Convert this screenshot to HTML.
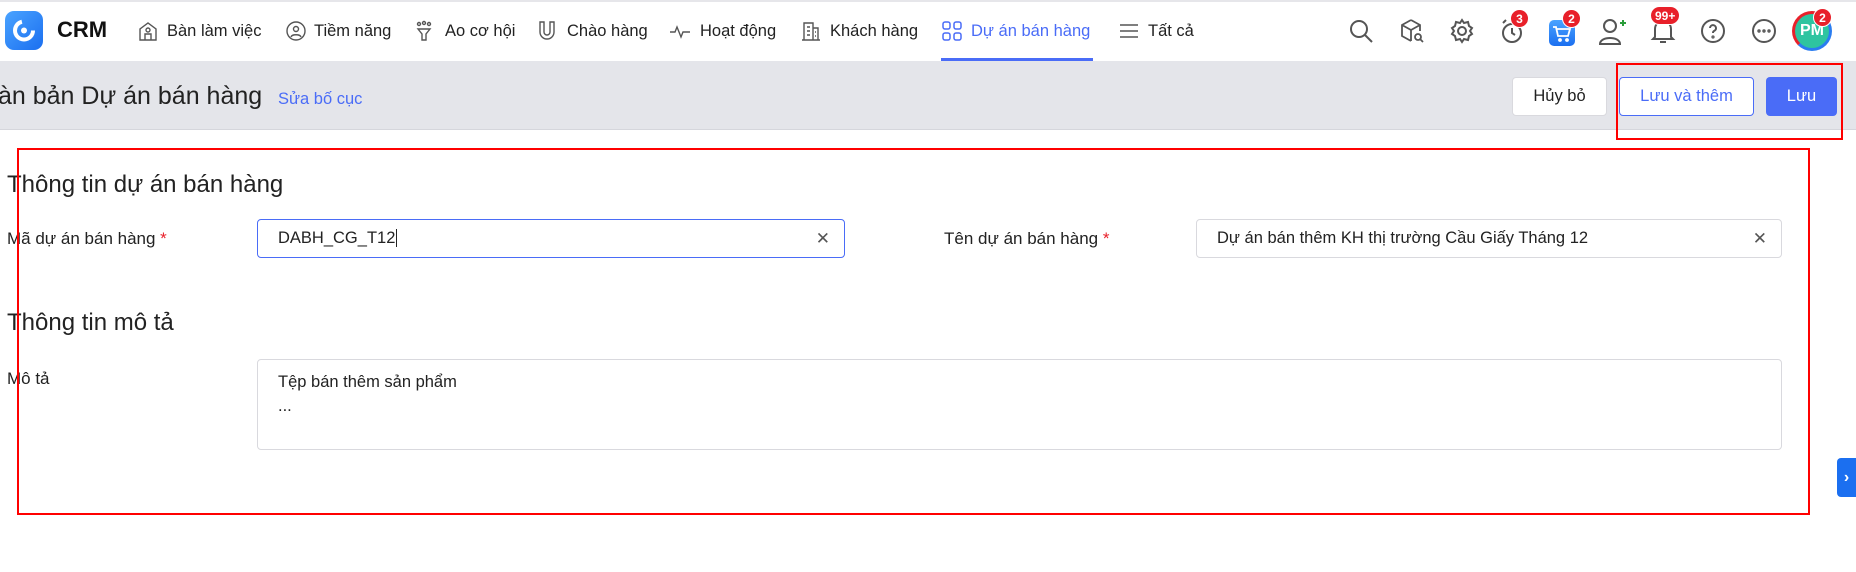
<!DOCTYPE html>
<html><head><meta charset="utf-8"><style>
*{box-sizing:border-box;margin:0;padding:0}
body{width:1856px;height:572px;background:#fff;font-family:"Liberation Sans",Arial,sans-serif;color:#1f1f1f;position:relative;overflow:hidden}
.a{position:absolute;white-space:nowrap}
.nav{font-size:16.5px;color:#222;top:22px}
.ic{position:absolute;top:20px}
.badge{position:absolute;background:#e8202a;color:#fff;font-weight:bold;font-size:12px;height:19px;min-width:19px;border-radius:10px;text-align:center;line-height:19px;padding:0 4px;border:1px solid #fff}
.lbl{font-size:17px;color:#222}
.req{color:#e8202a}
.inp{position:absolute;height:39px;border:1px solid #d9d9de;border-radius:4px;font-size:16.5px;padding:0 20px;line-height:37px;color:#222}
.x{position:absolute;right:14px;top:0;color:#555;font-size:17px}
</style></head><body>
<div class="a" style="left:0;top:0;width:1856px;height:2px;background:#e6e6ea"></div>
<div class="a" style="left:5px;top:11px;width:38px;height:39px;border-radius:9px;background:linear-gradient(135deg,#4aa3ff,#1b6ff0)">
<svg width="38" height="39" viewBox="0 0 38 39"><circle cx="19" cy="19.5" r="9" fill="none" stroke="#fff" stroke-width="4" stroke-dasharray="40 17"/><circle cx="19" cy="19.5" r="3" fill="#fff"/></svg></div>
<div class="a" style="left:57px;top:17px;font-size:22px;font-weight:bold;color:#111">CRM</div>

<svg class="ic" style="left:137px" width="22" height="22" viewBox="0 0 22 22" fill="none" stroke="#555" stroke-width="1.4"><path d="M3 20V9l8-6 8 6v11z"/><path d="M8 20v-6h6v6"/><circle cx="11" cy="10" r="2"/></svg>
<div class="a nav" style="left:167px">Bàn làm việc</div>
<svg class="ic" style="left:285px" width="22" height="22" viewBox="0 0 22 22" fill="none" stroke="#555" stroke-width="1.4"><circle cx="11" cy="11" r="9"/><circle cx="11" cy="9" r="2.5"/><path d="M6 17c1-3 9-3 10 0"/></svg>
<div class="a nav" style="left:314px">Tiềm năng</div>
<svg class="ic" style="left:414px" width="20" height="22" viewBox="0 0 20 22" fill="none" stroke="#555" stroke-width="1.4"><circle cx="5" cy="4" r="1.5"/><circle cx="10" cy="3" r="1.5"/><circle cx="15" cy="4" r="1.5"/><path d="M4 9h12l-4 5v6h-4v-6z"/></svg>
<div class="a nav" style="left:445px">Ao cơ hội</div>
<svg class="ic" style="left:537px" width="20" height="22" viewBox="0 0 20 22" fill="none" stroke="#555" stroke-width="1.4"><path d="M3 2v10a7 7 0 0 0 14 0V2h-4v10a3 3 0 0 1-6 0V2z"/></svg>
<div class="a nav" style="left:567px">Chào hàng</div>
<svg class="ic" style="left:669px" width="22" height="22" viewBox="0 0 22 22" fill="none" stroke="#555" stroke-width="1.4"><path d="M1 12h5l2-5 4 10 2-5h7"/></svg>
<div class="a nav" style="left:700px">Hoạt động</div>
<svg class="ic" style="left:800px" width="22" height="22" viewBox="0 0 22 22" fill="none" stroke="#555" stroke-width="1.4"><path d="M2 20h18M4 20V3h9v17M13 8h5v12"/><path d="M7 7h3M7 11h3M7 15h3M15 12h1M15 16h1"/></svg>
<div class="a nav" style="left:830px">Khách hàng</div>
<svg class="ic" style="left:942px" width="20" height="22" viewBox="0 0 20 22" fill="none" stroke="#4a6cf7" stroke-width="1.5"><rect x="1" y="2" width="7" height="7" rx="2"/><rect x="12" y="2" width="7" height="7" rx="2"/><rect x="1" y="13" width="7" height="7" rx="2"/><rect x="12" y="13" width="7" height="7" rx="2"/></svg>
<div class="a nav" style="left:971px;color:#4a6cf7">Dự án bán hàng</div>
<div class="a" style="left:941px;top:58px;width:152px;height:3px;background:#4a6cf7"></div>
<svg class="ic" style="left:1119px" width="20" height="22" viewBox="0 0 20 22" fill="none" stroke="#555" stroke-width="1.5"><path d="M1 5h18M1 11h18M1 17h18"/></svg>
<div class="a nav" style="left:1148px">Tất cả</div>

<svg class="ic" style="left:1348px;top:18px" width="26" height="26" viewBox="0 0 26 26" fill="none" stroke="#555" stroke-width="2"><circle cx="11" cy="11" r="8"/><path d="M17 17l7 7"/></svg>
<svg class="ic" style="left:1399px;top:18px" width="26" height="26" viewBox="0 0 26 26" fill="none" stroke="#555" stroke-width="1.8"><path d="M12 2l9 5v6M12 2L3 7v11l9 5M3 7l9 5 9-5M12 12v11"/><circle cx="19" cy="19" r="3"/><path d="M21 21l3 3"/></svg>
<svg class="ic" style="left:1449px;top:18px" width="26" height="26" viewBox="0 0 26 26" fill="none" stroke="#555" stroke-width="2"><circle cx="13" cy="13" r="4"/><path d="M13 2l2 3 4-1 1 4 3 2-2 3 2 3-3 2-1 4-4-1-2 3-2-3-4 1-1-4-3-2 2-3-2-3 3-2 1-4 4 1z"/></svg>
<svg class="ic" style="left:1499px;top:18px" width="26" height="26" viewBox="0 0 26 26" fill="none" stroke="#555" stroke-width="2"><circle cx="13" cy="15" r="9"/><path d="M13 10v5l3 2M4 5l3-3"/></svg>
<div class="badge" style="left:1510px;top:9px">3</div>
<div class="a" style="left:1549px;top:20px;width:26px;height:26px;border-radius:5px;background:linear-gradient(#4aa3ff,#1b6ff0)"><svg width="26" height="26" viewBox="0 0 26 26" fill="none" stroke="#fff" stroke-width="1.8"><path d="M4 7h3l2 9h10l2-7H8"/><circle cx="11" cy="20" r="1"/><circle cx="18" cy="20" r="1"/></svg></div>
<div class="badge" style="left:1562px;top:9px">2</div>
<svg class="ic" style="left:1598px;top:17px" width="30" height="28" viewBox="0 0 30 28" fill="none" stroke="#555" stroke-width="2"><circle cx="12" cy="9" r="6"/><path d="M2 27c0-8 20-8 20 0z"/><path d="M25 3v6M22 6h6" stroke="#2a9d3a"/></svg>
<svg class="ic" style="left:1650px;top:17px" width="26" height="28" viewBox="0 0 26 28" fill="none" stroke="#555" stroke-width="2"><path d="M5 20V12a8 8 0 0 1 16 0v8l2 2H3z"/><path d="M10 25h6"/></svg>
<div class="badge" style="left:1650px;top:6px">99+</div>
<svg class="ic" style="left:1700px;top:18px" width="26" height="26" viewBox="0 0 26 26" fill="none" stroke="#555" stroke-width="2"><circle cx="13" cy="13" r="11"/><path d="M10 10a3 3 0 1 1 4 3c-1 .5-1 1-1 2"/><circle cx="13" cy="19" r=".6"/></svg>
<svg class="ic" style="left:1751px;top:18px" width="26" height="26" viewBox="0 0 26 26" fill="none" stroke="#555" stroke-width="2"><circle cx="13" cy="13" r="11"/><circle cx="8" cy="13" r=".7"/><circle cx="13" cy="13" r=".7"/><circle cx="18" cy="13" r=".7"/></svg>
<div class="a" style="left:1792px;top:11px;width:40px;height:40px;border-radius:50%;border:3px solid #2a7cf0;border-left-color:#e8202a;border-top-color:#e8202a;background:#2ec4a0;color:#fff;font-weight:bold;font-size:16px;text-align:center;line-height:34px">PM</div>
<div class="badge" style="left:1813px;top:8px">2</div>

<div class="a" style="left:0;top:61px;width:1856px;height:69px;background:#e4e5ea;border-bottom:1px solid #d5d6dc"></div>
<div class="a" style="left:-2px;top:82px;font-size:25px;color:#222">àn bản Dự án bán hàng</div>
<div class="a" style="left:278px;top:90px;font-size:16.5px;color:#4a6cf7">Sửa bố cục</div>
<div class="a" style="left:1512px;top:77px;width:95px;height:39px;background:#fff;border:1px solid #d9d9de;border-radius:4px;font-size:16.5px;text-align:center;line-height:37px;color:#222">Hủy bỏ</div>
<div class="a" style="left:1619px;top:77px;width:135px;height:39px;background:#fff;border:1px solid #4a6cf7;border-radius:4px;font-size:16.5px;text-align:center;line-height:37px;color:#4a6cf7">Lưu và thêm</div>
<div class="a" style="left:1766px;top:77px;width:71px;height:39px;background:#4a6cf7;border-radius:4px;font-size:16.5px;text-align:center;line-height:39px;color:#fff">Lưu</div>
<div class="a" style="left:1616px;top:63px;width:227px;height:77px;border:2px solid #f00"></div>

<div class="a" style="left:7px;top:171px;font-size:24px;color:#222">Thông tin dự án bán hàng</div>
<div class="a lbl" style="left:7px;top:229px">Mã dự án bán hàng <span class="req">*</span></div>
<div class="inp" style="left:257px;top:219px;width:588px;border-color:#4a6cf7">DABH_CG_T12<span style="border-left:1px solid #222;margin-left:1px"></span><span class="x">✕</span></div>
<div class="a lbl" style="left:944px;top:229px">Tên dự án bán hàng <span class="req">*</span></div>
<div class="inp" style="left:1196px;top:219px;width:586px">Dự án bán thêm KH thị trường Cầu Giấy Tháng 12<span class="x">✕</span></div>
<div class="a" style="left:7px;top:309px;font-size:24px;color:#222">Thông tin mô tả</div>
<div class="a lbl" style="left:7px;top:369px">Mô tả</div>
<div class="inp" style="left:257px;top:359px;width:1525px;height:91px;line-height:24px;padding-top:10px">Tệp bán thêm sản phẩm<br>...</div>
<div class="a" style="left:17px;top:148px;width:1793px;height:367px;border:2px solid #f00"></div>
<div class="a" style="left:1837px;top:458px;width:19px;height:39px;background:#1b6ff0;border-radius:4px 0 0 4px;color:#fff;font-weight:bold;font-size:16px;line-height:39px;text-align:center">›</div>
</body></html>
